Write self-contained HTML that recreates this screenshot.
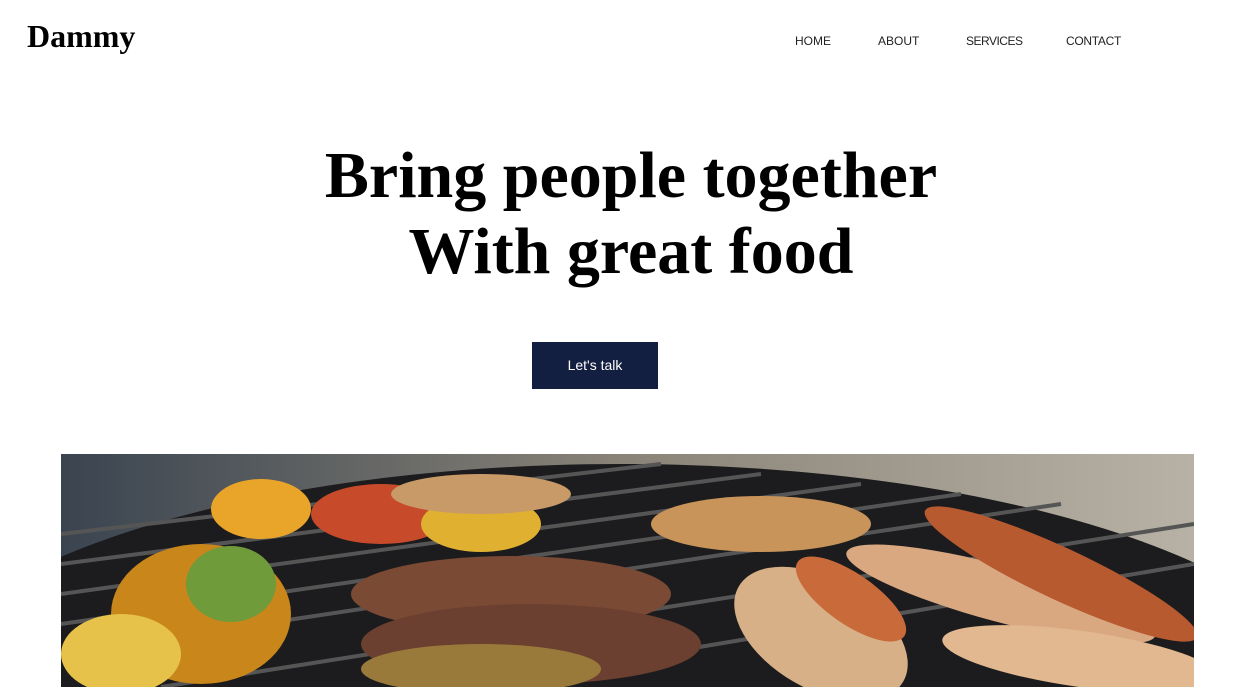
<!DOCTYPE html>
<html><head><style>
*{margin:0;padding:0;box-sizing:border-box}
html,body{width:1254px;height:687px;overflow:hidden}
body{background:#fff;position:relative;font-family:"Liberation Sans",sans-serif}
.logo{position:absolute;left:27px;top:18px;font:bold 32px "Liberation Serif",serif;color:#000}
.nav{position:absolute;top:34px;font-size:12px;color:#222;font-weight:300}
h1{position:absolute;left:0;width:1254px;padding-left:8px;top:138px;text-align:center;font:bold 66px/76px "Liberation Serif",serif;color:#000}
.btn{position:absolute;left:532px;top:342px;width:126px;height:47px;background:#131f40;color:#fff;font-size:14px;text-align:center;line-height:47px}
.img{position:absolute;left:61px;top:454px;width:1133px;height:233px;overflow:hidden;background:#2a2a2a}
</style></head><body>
<div class="logo">Dammy</div>
<div class="nav" style="left:795px">HOME</div>
<div class="nav" style="left:878px">ABOUT</div>
<div class="nav" style="left:966px;letter-spacing:-0.5px">SERVICES</div>
<div class="nav" style="left:1066px;letter-spacing:-0.3px">CONTACT</div>
<h1>Bring people together<br>With great food</h1>
<div class="btn">Let's talk</div>
<div class="img">
<svg width="1133" height="233" viewBox="0 0 1133 233">
<defs><linearGradient id="bg" x1="0" x2="1"><stop offset="0" stop-color="#3a4450"/><stop offset=".5" stop-color="#8a8478"/><stop offset="1" stop-color="#b8b2a6"/></linearGradient></defs>
<rect width="1133" height="233" fill="url(#bg)"/>
<ellipse cx="560" cy="260" rx="720" ry="250" fill="#1c1c1e"/>
<g stroke="#555" stroke-width="4">
<line x1="0" y1="80" x2="600" y2="10"/><line x1="0" y1="110" x2="700" y2="20"/><line x1="0" y1="140" x2="800" y2="30"/><line x1="0" y1="170" x2="900" y2="40"/><line x1="0" y1="200" x2="1000" y2="50"/><line x1="100" y1="233" x2="1133" y2="70"/><line x1="400" y1="233" x2="1133" y2="110"/>
</g>
<ellipse cx="140" cy="160" rx="90" ry="70" fill="#c9861a"/>
<ellipse cx="60" cy="200" rx="60" ry="40" fill="#e6c24a"/>
<ellipse cx="170" cy="130" rx="45" ry="38" fill="#6f9b3a"/>
<ellipse cx="200" cy="55" rx="50" ry="30" fill="#e8a52a"/>
<ellipse cx="320" cy="60" rx="70" ry="30" fill="#c74a2a"/>
<ellipse cx="420" cy="70" rx="60" ry="28" fill="#e0b130"/>
<ellipse cx="420" cy="40" rx="90" ry="20" fill="#c89a68"/>
<ellipse cx="450" cy="140" rx="160" ry="38" fill="#7a4a35"/>
<ellipse cx="470" cy="190" rx="170" ry="40" fill="#6b4030"/>
<ellipse cx="420" cy="215" rx="120" ry="25" fill="#9a7a3a"/>
<ellipse cx="700" cy="70" rx="110" ry="28" fill="#c8945a"/>
<ellipse cx="760" cy="180" rx="95" ry="55" fill="#d8b088" transform="rotate(30 760 180)"/>
<ellipse cx="790" cy="145" rx="65" ry="25" fill="#c86a3a" transform="rotate(35 790 145)"/>
<ellipse cx="940" cy="140" rx="160" ry="28" fill="#d9a880" transform="rotate(15 940 140)"/>
<ellipse cx="1000" cy="120" rx="150" ry="26" fill="#b85a30" transform="rotate(25 1000 120)"/>
<ellipse cx="1020" cy="205" rx="140" ry="28" fill="#e2b890" transform="rotate(8 1020 205)"/>
</svg>
</div>
</body></html>
